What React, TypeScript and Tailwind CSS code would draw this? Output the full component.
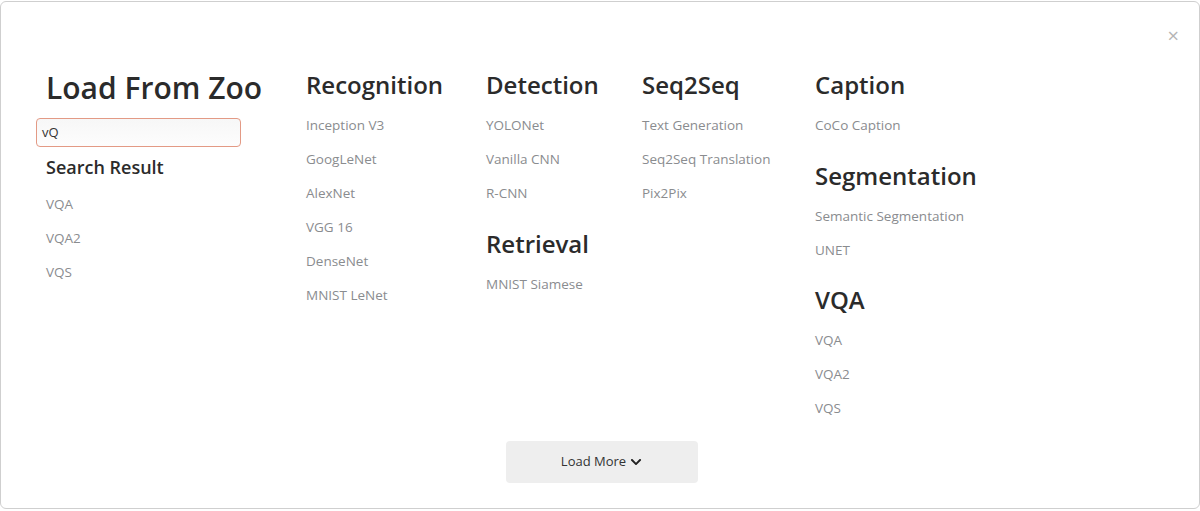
import React from "react";
import { FaChevronDown } from "react-icons/fa";

const font = { fontFamily: "'Open Sans', Lato, sans-serif" };

function Item({ children }: { children: React.ReactNode }) {
  return (
    <div className="h-[34px] leading-[34px] text-[13.5px] text-[#8a8c8f] whitespace-nowrap">{children}</div>
  );
}

function Heading({ children, first }: { children: React.ReactNode; first?: boolean }) {
  return (
    <div
      className={`text-[24px] leading-[30px] font-semibold text-[#2b2b2b] mb-[8px] whitespace-nowrap ${first ? "" : "mt-[19px]"}`}
    >
      {children}
    </div>
  );
}

export default function App() {
  return (
    <div className="w-[1200px] h-[511px] bg-white overflow-hidden" style={font}>
      <div className="relative mt-[1px] h-[508px] w-[1200px] border border-[#cfcfcf] rounded-[6px] bg-white">
        <div className="absolute right-[20px] top-[24px] text-[20px] leading-[20px] text-[#b5b5b5]">×</div>
        <div className="flex pl-[45px] pt-[68px]">
          <div className="w-[260px]">
            <div className="text-[30px] leading-[36px] font-semibold text-[#2b2b2b] whitespace-nowrap">Load From Zoo</div>
            <div className="ml-[-10px] mt-[12px] w-[205px] h-[29px] border border-[#e39a85] rounded-[4px] bg-gradient-to-b from-[#f7f7f7] to-[#fdfdfd] flex items-center px-[5px] text-[13px] text-[#333]">
              vQ
            </div>
            <div className="mt-[8px] text-[18px] leading-[24px] font-semibold text-[#2b2b2b]">Search Result</div>
            <div className="mt-[8px]">
              <Item>VQA</Item>
              <Item>VQA2</Item>
              <Item>VQS</Item>
            </div>
          </div>
          <div className="w-[180px]">
            <Heading first>Recognition</Heading>
            <Item>Inception V3</Item>
            <Item>GoogLeNet</Item>
            <Item>AlexNet</Item>
            <Item>VGG 16</Item>
            <Item>DenseNet</Item>
            <Item>MNIST LeNet</Item>
          </div>
          <div className="w-[156px]">
            <Heading first>Detection</Heading>
            <Item>YOLONet</Item>
            <Item>Vanilla CNN</Item>
            <Item>R-CNN</Item>
            <Heading>Retrieval</Heading>
            <Item>MNIST Siamese</Item>
          </div>
          <div className="w-[173px]">
            <Heading first>Seq2Seq</Heading>
            <Item>Text Generation</Item>
            <Item>Seq2Seq Translation</Item>
            <Item>Pix2Pix</Item>
          </div>
          <div className="flex-1">
            <Heading first>Caption</Heading>
            <Item>CoCo Caption</Item>
            <Heading>Segmentation</Heading>
            <Item>Semantic Segmentation</Item>
            <Item>UNET</Item>
            <div className="mt-[-1px]">
              <Heading>VQA</Heading>
            </div>
            <Item>VQA</Item>
            <Item>VQA2</Item>
            <Item>VQS</Item>
          </div>
        </div>
        <div className="flex justify-center mt-[16px] pl-[3px]">
          <button className="w-[192px] h-[42px] bg-[#eeeeee] rounded-[4px] text-[13px] text-[#333] flex items-center justify-center gap-[4px]">
            Load More <FaChevronDown className="w-[12px] h-[12px] text-[#222]" />
          </button>
        </div>
      </div>
    </div>
  );
}
